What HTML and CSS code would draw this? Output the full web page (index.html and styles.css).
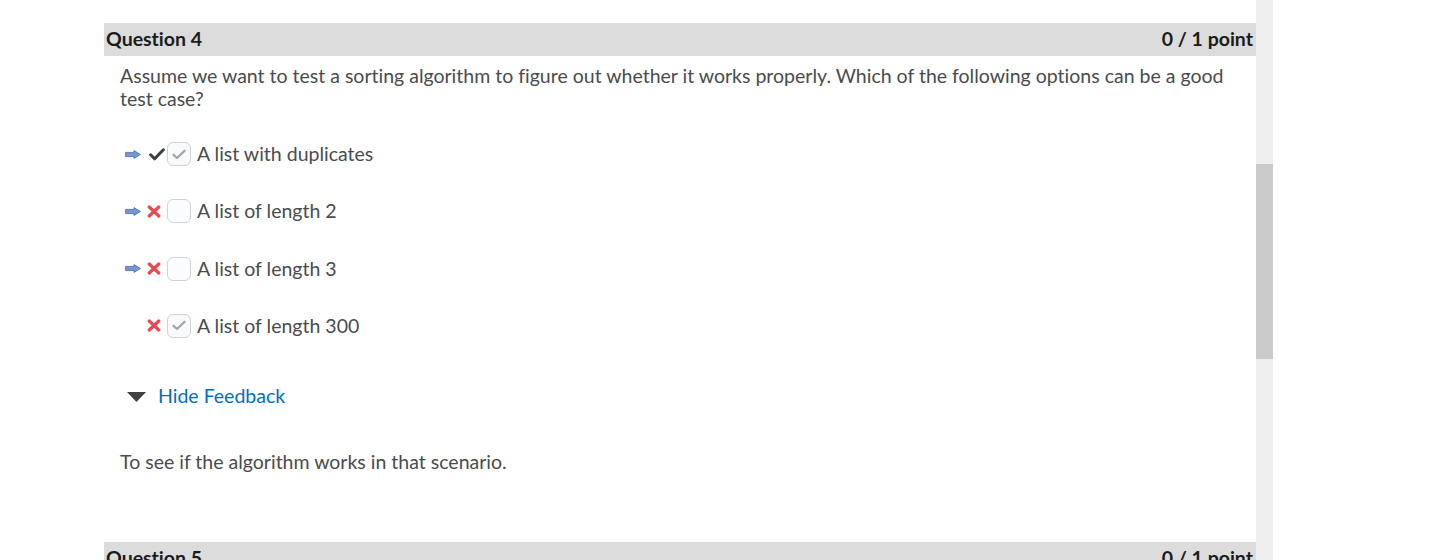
FILE: index.html
```html
<!DOCTYPE html>
<html lang="en">
<head>
<meta charset="utf-8">
<title>Question 4</title>
<link rel="stylesheet" href="styles.css">
</head>
<body>
<div class="page">
  <main class="quiz">
    <section class="question">
      <header class="q-head">
        <span class="q-title">Question 4</span>
        <span class="q-score">0 / 1 point</span>
      </header>
      <p class="q-text">Assume we want to test a sorting algorithm to figure out whether it works properly. Which of the following options can be a good test case?</p>
      <ul class="options">
        <li class="option">
          <span class="slot-arrow"><svg width="16" height="9" viewBox="0 0 16 9"><path d="M0.6 2.4 H9 V0.6 L15.4 4.5 L9 8.4 V6.6 H0.6 Z" fill="#7499cf" stroke="#5476ad" stroke-width="0.9" stroke-linejoin="round"/></svg></span>
          <span class="slot-status"><svg class="ic-check" width="16" height="13" viewBox="0 0 16 13"><path d="M1.6 6.8 L5.6 10.8 L14.4 1.8" fill="none" stroke="#3b3d3f" stroke-width="3" stroke-linecap="round" stroke-linejoin="round"/></svg></span>
          <span class="box checked"><svg width="14" height="11" viewBox="0 0 14 11"><path d="M1.5 5.8 L5 9 L12.5 1.8" fill="none" stroke="#a4a8ab" stroke-width="2.3" stroke-linecap="round" stroke-linejoin="round"/></svg></span>
          <span class="opt-label">A list with duplicates</span>
        </li>
        <li class="option">
          <span class="slot-arrow"><svg width="16" height="9" viewBox="0 0 16 9"><path d="M0.6 2.4 H9 V0.6 L15.4 4.5 L9 8.4 V6.6 H0.6 Z" fill="#7499cf" stroke="#5476ad" stroke-width="0.9" stroke-linejoin="round"/></svg></span>
          <span class="slot-status"><svg class="ic-x" width="14" height="13" viewBox="0 0 14 13"><path d="M2.2 2 L11.8 11 M11.8 2 L2.2 11" fill="none" stroke="#ea4a52" stroke-width="3.2" stroke-linecap="round"/></svg></span>
          <span class="box"></span>
          <span class="opt-label">A list of length 2</span>
        </li>
        <li class="option">
          <span class="slot-arrow"><svg width="16" height="9" viewBox="0 0 16 9"><path d="M0.6 2.4 H9 V0.6 L15.4 4.5 L9 8.4 V6.6 H0.6 Z" fill="#7499cf" stroke="#5476ad" stroke-width="0.9" stroke-linejoin="round"/></svg></span>
          <span class="slot-status"><svg class="ic-x" width="14" height="13" viewBox="0 0 14 13"><path d="M2.2 2 L11.8 11 M11.8 2 L2.2 11" fill="none" stroke="#ea4a52" stroke-width="3.2" stroke-linecap="round"/></svg></span>
          <span class="box"></span>
          <span class="opt-label">A list of length 3</span>
        </li>
        <li class="option">
          <span class="slot-arrow"></span>
          <span class="slot-status"><svg class="ic-x" width="14" height="13" viewBox="0 0 14 13"><path d="M2.2 2 L11.8 11 M11.8 2 L2.2 11" fill="none" stroke="#ea4a52" stroke-width="3.2" stroke-linecap="round"/></svg></span>
          <span class="box checked"><svg width="14" height="11" viewBox="0 0 14 11"><path d="M1.5 5.8 L5 9 L12.5 1.8" fill="none" stroke="#a4a8ab" stroke-width="2.3" stroke-linecap="round" stroke-linejoin="round"/></svg></span>
          <span class="opt-label">A list of length 300</span>
        </li>
      </ul>
      <div class="feedback-toggle">
        <svg class="tri" width="19" height="10" viewBox="0 0 19 10"><path d="M0 0 H19 L9.5 10 Z" fill="#3f4244"/></svg>
        <a class="toggle-link" href="#">Hide Feedback</a>
      </div>
      <p class="feedback">To see if the algorithm works in that scenario.</p>
    </section>
    <section class="question">
      <header class="q-head">
        <span class="q-title">Question 5</span>
        <span class="q-score">0 / 1 point</span>
      </header>
    </section>
  </main>
  <div class="scrollbar"><div class="thumb"></div></div>
</div>
</body>
</html>
```
FILE: styles.css
```css
html, body {
  margin: 0;
  padding: 0;
  background: #ffffff;
  height: 560px;
  overflow: hidden;
}
body {
  font-family: Lato, "Noto Sans", sans-serif;
  color: #494c4e;
  font-variant-ligatures: none;
}
.page {
  display: flex;
  height: 560px;
}
.quiz {
  margin-left: 104px;
  width: 1152px;
  padding-top: 23px;
}
.q-head {
  box-sizing: border-box;
  height: 33px;
  background: #dcdcdc;
  display: flex;
  justify-content: space-between;
  align-items: center;
  padding: 0 3px 2px 2px;
  font-weight: 700;
  font-size: 19.5px;
  color: #1b1b1b;
}
.q-text {
  margin: 8px 16px 0 16px;
  font-size: 19.5px;
  line-height: 23px;
}
.options {
  list-style: none;
  margin: 32px 0 0 16px;
  padding: 0;
  display: flex;
  flex-direction: column;
  gap: 33.3px;
}
.option {
  display: flex;
  align-items: center;
  height: 24px;
  font-size: 19.5px;
}
.slot-arrow {
  width: 24px;
  display: flex;
  justify-content: center;
  padding-left: 1px;
  box-sizing: border-box;
}
.slot-status {
  width: 23px;
  display: flex;
  justify-content: flex-end;
}
.ic-check { margin-right: 2px; }
.ic-x { margin-right: 6px; }
.box {
  box-sizing: border-box;
  width: 24px;
  height: 24px;
  border: 1px solid #cdd3d8;
  border-radius: 6px;
  background: #fbfcff;
  display: flex;
  align-items: center;
  justify-content: center;
}
.box.checked { background: #f9fafb; }
.opt-label {
  margin-left: 6px;
  line-height: 24px;
}
.feedback-toggle {
  margin: 46px 0 0 23px;
  height: 24px;
  display: flex;
  align-items: center;
}
.tri { margin-top: 2px; }
.toggle-link {
  margin-left: 12px;
  font-size: 19.5px;
  line-height: 24px;
  color: #006fbf;
  text-decoration: none;
}
.feedback {
  margin: 42px 0 0 16px;
  font-size: 19.5px;
  line-height: 24px;
}
.question + .question { margin-top: 68px; }
.scrollbar {
  width: 17px;
  height: 560px;
  background: #efefef;
  padding-top: 164px;
  box-sizing: border-box;
}
.thumb {
  height: 195px;
  background: #cbcbcb;
}
```
